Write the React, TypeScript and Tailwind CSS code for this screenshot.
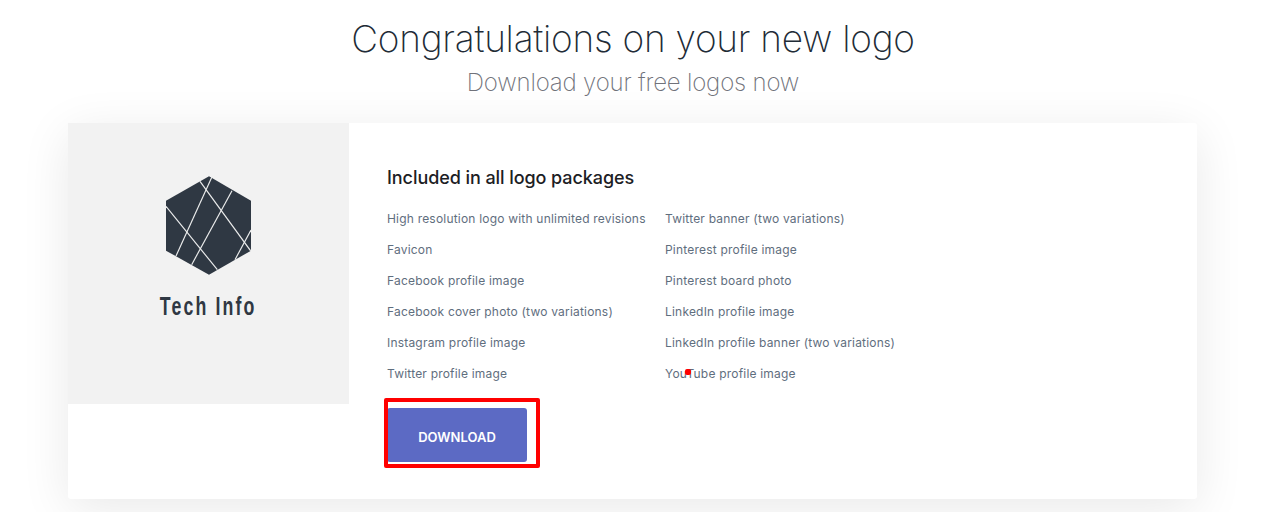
import React from "react";

const leftItems = [
  "High resolution logo with unlimited revisions",
  "Favicon",
  "Facebook profile image",
  "Facebook cover photo (two variations)",
  "Instagram profile image",
  "Twitter profile image",
];

const rightItems = [
  "Twitter banner (two variations)",
  "Pinterest profile image",
  "Pinterest board photo",
  "LinkedIn profile image",
  "LinkedIn profile banner (two variations)",
  "YouTube profile image",
];

const LogoMark: React.FC = () => (
  <svg width="85" height="99" viewBox="78 47 255 295" className="block">
    <path d="M207 47 L333 120 L333 270 L207 342 L78 270 L78 120 Z" fill="#2f3843" />
    <g stroke="#eceded" strokeWidth="3.5" fill="none">
      <path d="M180 62 L333 272" />
      <path d="M216 48 L108 286" />
      <path d="M276 90 L155 312" />
      <path d="M78 137 L232 327" />
      <path d="M333 208 L285 297" />
    </g>
  </svg>
);

const ItemList: React.FC<{ items: string[] }> = ({ items }) => (
  <ul className="flex w-[278px] flex-col gap-[13px]">
    {items.map((item) => (
      <li key={item} className="h-[18px] text-[12px] leading-[18px] tracking-[0.2px] text-[#5f6e7e] whitespace-nowrap">
        {item}
      </li>
    ))}
  </ul>
);

export default function App() {
  return (
    <div className="relative h-[512px] overflow-hidden bg-white font-['Inter','Liberation_Sans',sans-serif]">
      <div className="flex w-[1266px] flex-col items-center pt-[15px]">
        <h1 className="text-[37px] leading-[48px] font-extralight tracking-[-0.25px] text-[#212b36] whitespace-nowrap">
          Congratulations on your new logo
        </h1>
        <p className="mt-[4px] text-[24px] leading-[32px] font-extralight tracking-[-0.18px] text-[#70727a] whitespace-nowrap">
          Download your free logos now
        </p>
      </div>

      <div className="relative ml-[68px] mt-[24px] flex h-[376px] w-[1129px] items-start rounded-[3px] bg-white shadow-[0_10px_50px_rgba(0,0,0,0.09)]">
        <div className="flex h-[281px] w-[281px] flex-col items-center bg-[#f2f2f2] pt-[53px]">
          <LogoMark />
          <div className="mt-[16px] scale-x-[0.71] whitespace-nowrap text-[25px] leading-[30px] font-bold font-['Liberation_Sans',sans-serif] tracking-[3px] text-[#2f3843]">
            Tech Info
          </div>
        </div>

        <div className="pl-[38px] pt-[42px]">
          <h2 className="text-[18px] leading-[26px] font-medium tracking-[-0.07px] text-[#1c2024]">
            Included in all logo packages
          </h2>
          <div className="mt-[19px] flex">
            <ItemList items={leftItems} />
            <ItemList items={rightItems} />
          </div>
          <button
            type="button"
            className="mt-[25px] block h-[54px] w-[140px] rounded-[3px] bg-[#5c6ac4] pt-[5px] text-[13px] font-semibold tracking-[0px] text-white"
          >
            DOWNLOAD
          </button>
        </div>
      </div>

      {/* red annotation drawn over the screenshot */}
      <div className="absolute left-[384px] top-[398px] h-[70px] w-[156px] rounded-[2px] border-[4px] border-[#ff0000]" />
      <div className="absolute left-[685px] top-[369px] h-[6px] w-[6px] rounded-[2px] bg-[#ff0000]" />
    </div>
  );
}
